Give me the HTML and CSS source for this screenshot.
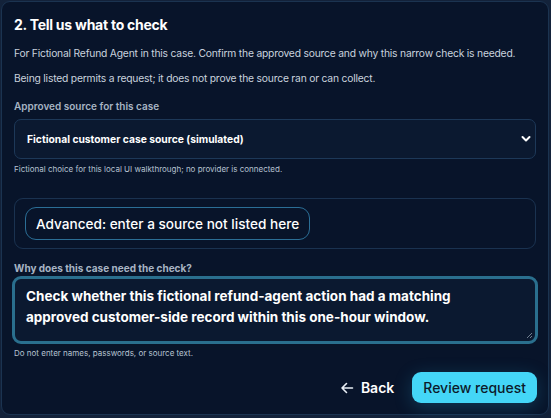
FILE: index.html
```html
<!DOCTYPE html>
<html>
<head>
<meta charset="utf-8">
<link rel="stylesheet" href="styles.css">
</head>
<body>
<section class="card">
  <h2 class="title">2. Tell us what to check</h2>
  <p class="lead">For Fictional Refund Agent in this case. Confirm the approved source and why this narrow check is needed.</p>
  <p class="lead">Being listed permits a request; it does not prove the source ran or can collect.</p>

  <label class="label">Approved source for this case</label>
  <div class="select">
    <span class="select-text">Fictional customer case source (simulated)</span>
    <svg class="chev" width="10" height="8" viewBox="0 0 10 8"><path d="M1.5 2 L5 5.5 L8.5 2" fill="none" stroke="#ffffff" stroke-width="2" stroke-linecap="round" stroke-linejoin="round"/></svg>
  </div>
  <p class="hint">Fictional choice for this local UI walkthrough; no provider is connected.</p>

  <div class="advanced">
    <button class="adv-btn">Advanced: enter a source not listed here</button>
  </div>

  <label class="label label-why">Why does this case need the check?</label>
  <div class="textarea">
    <span class="ta-text">Check whether this fictional refund-agent action had a matching approved customer-side record within this one-hour window.</span>
    <svg class="grip" width="7" height="7" viewBox="0 0 7 7"><path d="M6 1 L1 6 M6 4 L4 6" stroke="#8a98a8" stroke-width="0.8"/></svg>
  </div>
  <p class="hint hint2">Do not enter names, passwords, or source text.</p>

  <div class="actions">
    <button class="back">
      <svg width="14" height="12" viewBox="0 0 14 12"><path d="M12.5 6 H2 M6.5 1.5 L2 6 L6.5 10.5" fill="none" stroke="#e8eef5" stroke-width="1.6" stroke-linecap="round" stroke-linejoin="round"/></svg>
      <span>Back</span>
    </button>
    <button class="primary">Review request</button>
  </div>
</section>
</body>
</html>
```
FILE: styles.css
```css
html, body {
  margin: 0;
  padding: 0;
}
body {
  background: #13223a;
  width: 551px;
  height: 418px;
  overflow: hidden;
  font-family: Inter, "Liberation Sans", sans-serif;
  color: #e8eef5;
}
.card {
  box-sizing: border-box;
  margin: 1px 2px 0 1px;
  height: 414px;
  border: 1px solid #1b3350;
  border-radius: 9px;
  background: #08142a;
  padding: 11px 12px 0 12px;
}
.title {
  margin: 0;
  font-size: 14px;
  font-weight: 700;
  letter-spacing: -0.25px;
  color: #ffffff;
  line-height: 24px;
}
.lead {
  margin: 7px 0 0 0;
  font-size: 10.3px;
  letter-spacing: -0.2px;
  line-height: 19px;
  color: #c8d2de;
}
.lead + .lead {
  margin-top: 6px;
}
.label {
  display: block;
  margin-top: 11px;
  font-size: 10px;
  font-weight: 600;
  color: #a7b4c4;
  line-height: 14px;
}
.select {
  margin-top: 6px;
  height: 40px;
  box-sizing: border-box;
  border: 1px solid #1d3858;
  border-radius: 7px;
  background: #0b1930;
  display: flex;
  align-items: center;
  justify-content: space-between;
  padding: 0 4px 0 12px;
}
.select-text {
  font-size: 10.3px;
  font-weight: 700;
  color: #ffffff;
}
.chev {
  display: block;
}
.hint {
  margin: 4px 0 0 0;
  font-size: 8px;
  line-height: 12px;
  color: #b6c2d0;
}
.advanced {
  margin-top: 23px;
  height: 51px;
  box-sizing: border-box;
  border: 1px solid #1a3250;
  border-radius: 9px;
  padding: 8px 10px;
  display: flex;
  align-items: flex-start;
}
.adv-btn {
  height: 33px;
  box-sizing: border-box;
  border: 1px solid #2b6e96;
  border-radius: 11px;
  background: #08142a;
  color: #ffffff;
  font-family: inherit;
  font-size: 13.6px;
  font-weight: 500;
  padding: 0 10px;
}
.label-why {
  margin-top: 12px;
  font-weight: 700;
  font-size: 10px;
}
.textarea {
  position: relative;
  margin: 1px -2px 0 -2px;
  height: 68px;
  box-sizing: border-box;
  border: 3px solid #2a6f8e;
  border-radius: 9px;
  background: #0b1930;
  padding: 7px 11px;
}
.ta-text {
  display: block;
  font-size: 13.5px;
  font-weight: 700;
  line-height: 21px;
  color: #ffffff;
  max-width: 445px;
}
.grip {
  position: absolute;
  right: 2px;
  bottom: 2px;
}
.hint2 {
  margin-top: 3px;
}
.actions {
  margin-top: 13px;
  margin-right: -1px;
  display: flex;
  justify-content: flex-end;
  align-items: center;
  gap: 18px;
}
.back {
  display: flex;
  align-items: center;
  gap: 7px;
  background: none;
  border: none;
  padding: 0;
  color: #ffffff;
  font-family: inherit;
  font-size: 14px;
  font-weight: 600;
}
.primary {
  height: 31px;
  padding: 0 11px;
  border: none;
  border-radius: 9px;
  background: #44d6f7;
  color: #0c1a2a;
  font-family: inherit;
  font-size: 14px;
  font-weight: 500;
  box-shadow: 0 4px 18px rgba(40, 170, 220, 0.25);
}
```
